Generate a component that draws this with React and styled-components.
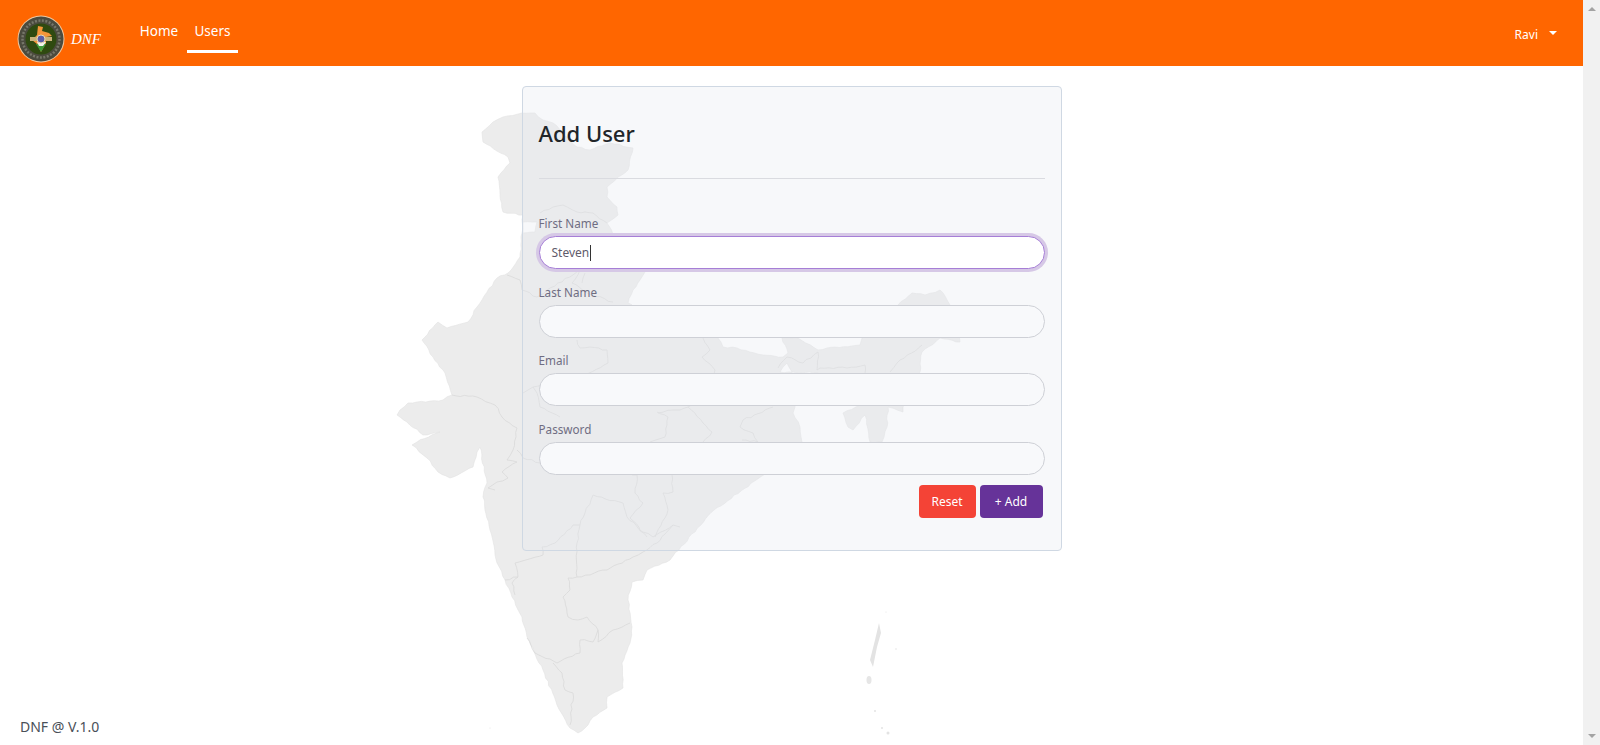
import React from "react";
import styled, { createGlobalStyle } from "styled-components";

const Global = createGlobalStyle`
  html, body { margin: 0; height: 100%; overflow: hidden; background: #fff; }
  * { box-sizing: border-box; }
  body { font-family: "Noto Sans", "Open Sans", "Liberation Sans", sans-serif; }
`;

const Shell = styled.div`
  display: flex;
  height: 745px;
`;
const Page = styled.div`
  position: relative;
  flex: 1;
  display: flex;
  flex-direction: column;
  overflow: hidden;
`;
const Scrollbar = styled.div`
  width: 17px;
  background: #f1f1f1;
  display: flex;
  flex-direction: column;
  justify-content: space-between;
  align-items: center;
  padding: 7px 0;
`;
const ScrollUp = styled.div`
  width: 0; height: 0;
  border-left: 4px solid transparent;
  border-right: 4px solid transparent;
  border-bottom: 4px solid #a3a3a3;
`;
const ScrollDown = styled(ScrollUp)`
  border-bottom: 0;
  border-top: 4px solid #a3a3a3;
`;
const Nav = styled.header`
  position: relative;
  height: 66px;
  flex: none;
  background: #ff6600;
  display: flex;
  align-items: flex-start;
  padding: 0 26px 0 17px;
  color: #fff;
`;
const LogoWrap = styled.div`
  display: flex;
  margin-top: 15px;
`;
const Brand = styled.span`
  font-family: "Liberation Serif", serif;
  font-style: italic;
  font-size: 15px;
  line-height: 20px;
  margin: 29px 30px 0 6px;
`;
const NavLink = styled.a`
  display: flex;
  align-items: center;
  justify-content: center;
  width: ${(p) => p.$w}px;
  height: 38px;
  margin-top: 15px;
  padding: 0 0 3px;
  font-size: 13.5px;
  border-bottom: 3px solid ${(p) => (p.$active ? "#fff" : "transparent")};
`;
const Spacer = styled.div`flex: 1;`;
const UserMenu = styled.div`
  display: flex;
  align-items: center;
  gap: 11px;
  height: 20px;
  margin-top: 24px;
  font-size: 12px;
`;
const Caret = styled.span`
  width: 0; height: 0;
  border-left: 4px solid transparent;
  border-right: 4px solid transparent;
  border-top: 4px solid #fff;
  margin-top: -3px;
`;
const Content = styled.main`
  position: relative;
  flex: 1;
  padding-top: 20px;
`;
const MapArt = styled.svg`
  position: absolute;
  left: 0;
  top: -66px;
  pointer-events: none;
`;
const Card = styled.section`
  position: relative;
  width: 540px;
  margin: 0 auto;
  padding: 16px 16px 32px;
  border: 1px solid #cfd8e3;
  border-radius: 4px;
  background: rgba(230, 233, 240, 0.32);
`;
const Title = styled.h1`
  margin: 14px 0 0;
  font-size: 22px;
  line-height: 32px;
  font-weight: 500;
  color: #212529;
`;
const Divider = styled.hr`
  margin: 29px 0 35px;
  border: 0;
  border-top: 1px solid #dadbe0;
`;
const Fields = styled.div`
  display: flex;
  flex-direction: column;
  gap: 13.5px;
`;
const Label = styled.label`
  display: block;
  font-size: 11.7px;
  line-height: 18px;
  margin-bottom: 4px;
  color: #6f6d82;
`;
const Input = styled.input`
  display: block;
  width: 100%;
  height: 33px;
  border: 1px solid #ced0d6;
  border-radius: 17px;
  background: #f8f9fb;
  outline: 0;
`;
const FocusedInput = styled.div`
  display: flex;
  align-items: center;
  width: 100%;
  height: 33px;
  padding: 0 12px;
  border: 1px solid #a67ed6;
  border-radius: 17px;
  background: #fff;
  box-shadow: 0 0 0 3px #d6c8e6;
  font-size: 12px;
  color: #5f5b6b;
`;
const TextCaret = styled.span`
  width: 1px;
  height: 16px;
  margin-left: 1px;
  background: #333;
`;
const Actions = styled.div`
  display: flex;
  justify-content: flex-end;
  gap: 4px;
  margin-top: 10px;
  padding-right: 2px;
`;
const Button = styled.button`
  width: ${(p) => p.$w}px;
  height: 33px;
  padding: 0;
  border: 0;
  border-radius: 4px;
  background: ${(p) => p.$bg};
  color: #fff;
  font-family: inherit;
  font-size: 12px;
`;
const Footer = styled.footer`
  position: absolute;
  left: 20px;
  bottom: 9px;
  font-size: 14px;
  line-height: 18px;
  color: #4a5058;
`;

const OUTLINE = [
  [503,117],[522,113],[535,113],[543,120],[553,123],[577,147],[590,150],[610,143],[633,148],[628,170],[618,177],[607,187],[607,197],[617,207],[618,215],[607,223],[620,245],[645,272],[633,290],[628,303],[660,322],[703,330],[718,338],[723,347],[737,348],[763,355],[783,357],[788,353],[782,338],[798,338],[818,350],[827,348],[860,345],[862,338],[885,325],[898,305],[912,293],[925,295],[940,290],[947,300],[950,305],[960,342],[940,338],[922,352],[920,372],[903,407],[903,412],[888,407],[887,427],[882,442],[870,442],[865,415],[853,430],[848,427],[843,413],[860,405],[845,395],[818,373],[780,372],[787,363],[795,380],[795,407],[793,413],[800,427],[802,442],[765,474],[714,510],[673,556],[670,560],[647,570],[643,580],[632,582],[628,600],[632,627],[630,643],[622,663],[623,688],[607,697],[607,708],[593,717],[588,725],[578,733],[570,728],[557,705],[543,670],[527,637],[522,617],[512,597],[505,580],[497,563],[490,530],[483,497],[487,483],[480,447],[477,452],[473,467],[450,478],[438,472],[427,458],[412,445],[417,442],[440,432],[423,435],[407,422],[397,415],[400,410],[408,403],[417,402],[443,400],[452,395],[445,373],[433,357],[422,340],[438,322],[447,328],[468,322],[477,307],[497,278],[508,273],[520,257],[522,233],[523,215],[503,212],[498,177],[510,163],[508,157],[483,142],[482,132],[493,122],
];
const HOLE = [[523,222],[537,222],[535,232],[523,233]];

const BORDERS = [
  [[452,395],[477,397],[495,405],[502,417],[517,428],[513,450],[507,460],[517,462],[502,472],[508,478],[497,482],[488,488],[495,490]],
  [[517,450],[523,458],[540,463],[590,470],[637,475]],
  [[593,495],[585,513],[580,525],[573,525],[555,543],[542,547],[543,555],[515,563],[518,577],[505,580]],
  [[580,525],[577,543],[577,577],[568,578],[570,590],[563,597],[568,617],[578,620],[587,617],[598,630],[593,642],[580,640],[580,653],[557,663],[535,653],[527,638]],
  [[577,577],[607,570],[633,557],[643,552],[657,543],[673,525],[680,527]],
  [[598,630],[598,642],[613,630],[630,623]],
  [[553,663],[562,673],[565,690],[573,693],[570,725]],
  [[593,495],[623,503],[627,517],[643,532],[653,537],[673,525]],
  [[637,475],[635,493],[643,503],[630,518],[647,537]],
  [[672,475],[673,492],[663,493],[668,510],[655,537]],
  [[657,412],[668,417],[665,437],[650,442]],
  [[518,577],[512,583],[515,595]],
  [[540,213],[553,207],[563,205],[577,212],[593,213],[607,223]],
  [[507,275],[520,280],[522,290],[537,297],[547,290],[580,270],[572,283],[587,293],[613,302]],
  [[585,273],[582,283]],
  [[577,340],[580,348],[590,347],[607,350],[608,363],[580,377],[560,385],[533,387],[523,393]],
  [[533,387],[537,393],[540,407],[560,417]],
  [[658,413],[673,410],[680,410],[688,407],[703,423],[712,432],[703,442]],
  [[703,338],[710,350],[702,357],[715,370],[712,390],[688,407]],
  [[778,368],[787,357],[803,363],[818,352],[817,370],[820,368],[847,368],[865,365],[865,373]],
  [[922,345],[897,363],[890,372]],
  [[773,407],[743,420],[740,427],[753,433],[758,442],[742,440]],
];

// Wiggles each straight map segment so coasts and borders read as hand-surveyed lines.
function roughen(points, closed, amount, seed0) {
  let seed = seed0;
  const rand = () => {
    seed = (seed * 16807) % 2147483647;
    return (seed % 1000) / 500 - 1;
  };
  const out = [];
  const last = closed ? points.length : points.length - 1;
  for (let i = 0; i < last; i++) {
    const [x1, y1] = points[i];
    const [x2, y2] = points[(i + 1) % points.length];
    const len = Math.hypot(x2 - x1, y2 - y1);
    const steps = Math.max(1, Math.floor(len / 4));
    for (let s = 0; s < steps; s++) {
      const t = s / steps;
      const j = s === 0 ? 0 : rand() * amount;
      out.push(`${(x1 + (x2 - x1) * t + (-(y2 - y1) / len) * j).toFixed(1)} ${(y1 + (y2 - y1) * t + ((x2 - x1) / len) * j).toFixed(1)}`);
    }
  }
  if (!closed) out.push(points[last].join(" "));
  return "M" + out.join("L") + (closed ? "Z" : "");
}

function IndiaMap() {
  return (
    <MapArt width="1583" height="745" viewBox="0 0 1583 745">
      <path
        d={`${roughen(OUTLINE, true, 0.8, 12345)}${roughen(HOLE, true, 0.3, 777)}`}
        fill="#ececec"
        fillRule="evenodd"
        stroke="#e2e2e2"
        strokeWidth="0.6"
      />
      {BORDERS.map((b, i) => (
        <path key={i} d={roughen(b, false, 1, 4001 + i * 97)} fill="none" stroke="#d9d9d9" strokeWidth="0.8" />
      ))}
      <path d="M879 623L881 633L877 647L873 667L870 660L875 640Z" fill="#e3e3e3" />
      <ellipse cx="869" cy="680" rx="2.5" ry="4" fill="#e6e6e6" />
      <circle cx="875" cy="711" r="1" fill="#e3e3e3" />
      <circle cx="888" cy="733" r="1.5" fill="#e3e3e3" />
      <circle cx="882" cy="728" r="1" fill="#e3e3e3" />
      <circle cx="886" cy="612" r=".6" fill="#e3e3e3" />
      <circle cx="896" cy="649" r=".8" fill="#e3e3e3" />
      <circle cx="490" cy="728" r=".6" fill="#e3e3e3" />
    </MapArt>
  );
}

function Logo() {
  return (
    <svg width="48" height="48" viewBox="0 0 48 48">
      <circle cx="24" cy="24" r="23.5" fill="#f0c79e" />
      <circle cx="24" cy="24" r="22.5" fill="#4b4b3e" />
      <circle cx="24" cy="24" r="18.5" fill="none" stroke="#77776a" strokeWidth="2.5" strokeDasharray="2 1.5" />
      <circle cx="24" cy="24" r="15.5" fill="#2f4a10" />
      <path d="M21 11L26 12L25 16L32 18L35 21L29 22L29 28L24 37L20 29L15 25L20 20Z" fill="#f5963a" />
      <path d="M19 29L29 29L24 37Z" fill="#3f9a3a" />
      <path d="M20 27L29 27L26 31L22 31Z" fill="#f4f4ee" />
      <rect x="13" y="22" width="7" height="4" fill="#c9b27a" />
      <rect x="28" y="22" width="7" height="4" fill="#c9b27a" />
      <circle cx="24" cy="24" r="4" fill="#5b5ea6" stroke="#e8d9b5" />
    </svg>
  );
}

export default function App() {
  return (
    <Shell>
      <Global />
      <Page>
        <Nav>
          <LogoWrap><Logo /></LogoWrap>
          <Brand>DNF</Brand>
          <NavLink $w={56}>Home</NavLink>
          <NavLink $w={51} $active>Users</NavLink>
          <Spacer />
          <UserMenu>
            Ravi
            <Caret />
          </UserMenu>
        </Nav>
        <Content>
          <IndiaMap />
          <Card>
            <Title>Add User</Title>
            <Divider />
            <Fields>
              <div>
                <Label>First Name</Label>
                <FocusedInput>Steven<TextCaret /></FocusedInput>
              </div>
              <div>
                <Label>Last Name</Label>
                <Input type="text" />
              </div>
              <div>
                <Label>Email</Label>
                <Input type="text" />
              </div>
              <div>
                <Label>Password</Label>
                <Input type="password" />
              </div>
            </Fields>
            <Actions>
              <Button $w={57} $bg="#f44336">Reset</Button>
              <Button $w={63} $bg="#663399">+ Add</Button>
            </Actions>
          </Card>
        </Content>
        <Footer>DNF @ V.1.0</Footer>
      </Page>
      <Scrollbar>
        <ScrollUp />
        <ScrollDown />
      </Scrollbar>
    </Shell>
  );
}
